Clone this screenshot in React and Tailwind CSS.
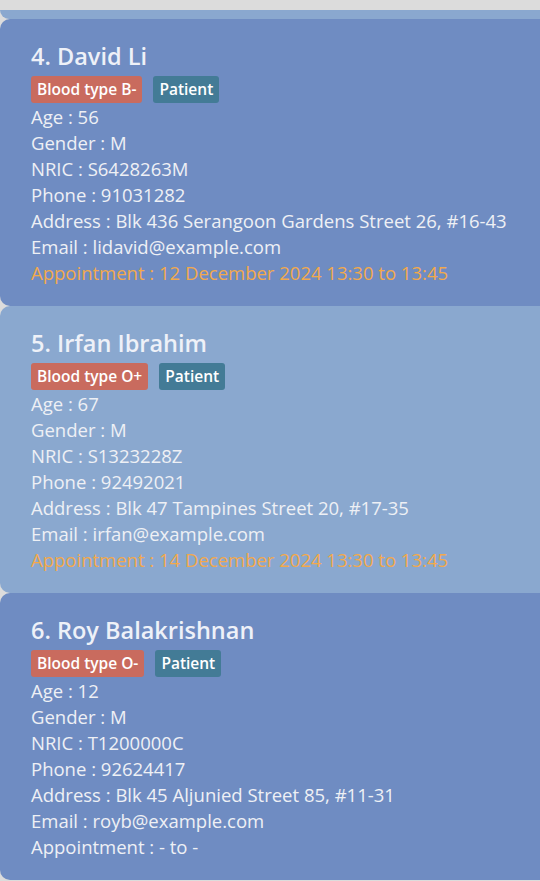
import React from "react";

const patients = [
    {
        id: 4,
        name: "David Li",
        blood: "B-",
        age: 56,
        gender: "M",
        nric: "S6428263M",
        phone: "91031282",
        address: "Blk 436 Serangoon Gardens Street 26, #16-43",
        email: "lidavid@example.com",
        appointment: "12 December 2024 13:30 to 13:45",
    },
    {
        id: 5,
        name: "Irfan Ibrahim",
        blood: "O+",
        age: 67,
        gender: "M",
        nric: "S1323228Z",
        phone: "92492021",
        address: "Blk 47 Tampines Street 20, #17-35",
        email: "irfan@example.com",
        appointment: "14 December 2024 13:30 to 13:45",
    },
    {
        id: 6,
        name: "Roy Balakrishnan",
        blood: "O-",
        age: 12,
        gender: "M",
        nric: "T1200000C",
        phone: "92624417",
        address: "Blk 45 Aljunied Street 85, #11-31",
        email: "royb@example.com",
        appointment: null,
    },
];

const PatientCard = ({ patient, odd }) => {
    const bg = odd ? "bg-[#8aa8cf]" : "bg-[#6f8cc2]";
    return (
        <div className={`${bg} rounded-l-[10px] pl-[31px] pt-[22px] pb-[20px] h-[287px]`}>
            <div className="text-[23.5px] leading-[30px] font-semibold text-[#eef1f8]">
                {patient.id}. {patient.name}
            </div>
            <div className="flex flex-row gap-[11px] mt-[5px]">
                <span className="h-[27px] flex items-center px-[6px] rounded-[3px] bg-[#c96b5e] text-white text-[15.5px] font-semibold">
                    Blood type {patient.blood}
                </span>
                <span className="h-[27px] flex items-center px-[6px] rounded-[3px] bg-[#437b96] text-white text-[15.5px] font-semibold">
                    Patient
                </span>
            </div>
            <ul className="text-[18.5px] leading-[26px] text-[#eef0f5] mt-[1px]">
                <li>Age : {patient.age}</li>
                <li>Gender : {patient.gender}</li>
                <li>NRIC : {patient.nric}</li>
                <li>Phone : {patient.phone}</li>
                <li>Address : {patient.address}</li>
                <li>Email : {patient.email}</li>
                {patient.appointment ? (
                    <li className="text-[#f2a94c]">
                        Appointment : {patient.appointment}
                    </li>
                ) : (
                    <li>Appointment : - to -</li>
                )}
            </ul>
        </div>
    );
};

export default function App() {
    return (
        <div
            className="w-[540px] h-[881px] overflow-hidden bg-[#dcdcdc]"
            style={{ fontFamily: '"Open Sans", "Noto Sans", sans-serif' }}
        >
            <div className="h-[10px]" />
            {/* tail of the card scrolled above */}
            <div className="h-[9px] bg-[#8aa8cf] rounded-bl-[10px]" />
            {patients.map((p, i) => (
                <PatientCard key={p.id} patient={p} odd={i % 2 === 1} />
            ))}
        </div>
    );
}
